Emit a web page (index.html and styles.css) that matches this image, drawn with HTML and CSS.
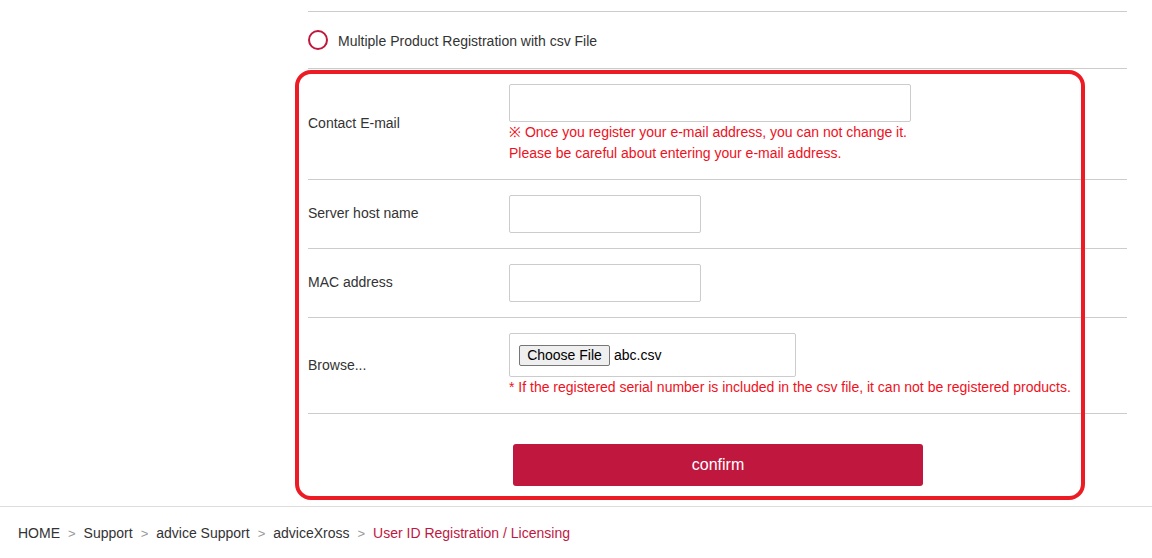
FILE: index.html
```html
<!DOCTYPE html>
<html lang="en">
<head>
<meta charset="utf-8">
<title>User ID Registration / Licensing</title>
<link rel="stylesheet" href="styles.css">
</head>
<body>
<div class="page">
  <div class="form">
    <div class="radio-row">
      <span class="radio"></span>
      <span class="radio-label">Multiple Product Registration with csv File</span>
    </div>
    <div class="row">
      <div class="label">Contact E-mail</div>
      <div class="field">
        <input class="input wide" type="text">
        <p class="note">※ Once you register your e-mail address, you can not change it.<br>Please be careful about entering your e-mail address.</p>
      </div>
    </div>
    <div class="row">
      <div class="label">Server host name</div>
      <div class="field"><input class="input narrow" type="text"></div>
    </div>
    <div class="row">
      <div class="label">MAC address</div>
      <div class="field"><input class="input narrow" type="text"></div>
    </div>
    <div class="row">
      <div class="label">Browse...</div>
      <div class="field">
        <div class="filebox"><button class="choose" type="button">Choose File</button><span class="filename">abc.csv</span></div>
        <p class="note">* If the registered serial number is included in the csv file, it can not be registered products.</p>
      </div>
    </div>
    <div class="actions">
      <button class="confirm" type="button">confirm</button>
    </div>
  </div>
  <div class="footer">
    <nav class="breadcrumb">
      <span class="crumb">HOME</span><span class="sep">&gt;</span><span class="crumb">Support</span><span class="sep">&gt;</span><span class="crumb">advice Support</span><span class="sep">&gt;</span><span class="crumb">adviceXross</span><span class="sep">&gt;</span><span class="crumb current">User ID Registration / Licensing</span>
    </nav>
  </div>
  <div class="highlight"></div>
</div>
</body>
</html>
```
FILE: styles.css
```css
html, body {
  margin: 0;
  padding: 0;
  background: #fff;
}
body {
  font-family: "Liberation Sans", Arial, sans-serif;
  font-size: 14px;
  color: #333;
}
.page {
  position: relative;
  padding-top: 11px;
  height: 547px;
}
.form {
  margin-left: 308px;
  width: 819px;
}
.radio-row {
  border-top: 1px solid #ccc;
  display: flex;
  align-items: center;
  gap: 10px;
  padding-top: 2px;
  box-sizing: border-box;
  height: 57px;
}
.radio {
  width: 20px;
  height: 20px;
  box-sizing: border-box;
  border: 2px solid #c0173f;
  border-radius: 50%;
  flex: none;
  margin-top: -2px;
}
.radio-label {
  color: #333;
}
.row {
  display: grid;
  grid-template-columns: 201px 1fr;
  align-items: center;
  border-top: 1px solid #ccc;
  padding: 15px 0;
}
.label {
  color: #333;
  margin-top: -2px;
}
.field {
  display: flex;
  flex-direction: column;
  align-items: flex-start;
}
.input {
  height: 38px;
  box-sizing: border-box;
  border: 1px solid #ccc;
  border-radius: 2px;
  margin: 0;
  padding: 0 8px;
  font: inherit;
}
.input.wide { width: 402px; }
.input.narrow { width: 192px; }
.note {
  margin: 0;
  color: #ee1122;
  line-height: 21px;
}
.filebox {
  width: 287px;
  height: 44px;
  box-sizing: border-box;
  border: 1px solid #ccc;
  border-radius: 2px;
  display: flex;
  align-items: center;
  padding-left: 9px;
}
.choose {
  font-family: "Liberation Sans", Arial, sans-serif;
  font-size: 14px;
  color: #000;
  background: #efefef;
  border: 1px solid #767676;
  border-radius: 2px;
  width: 91px;
  height: 21px;
  padding: 0;
  margin: 0 4px 0 0;
}
.filename {
  color: #000;
  font-size: 14px;
}
.actions {
  border-top: 1px solid #ccc;
  padding: 30px 0 20px;
  display: flex;
  justify-content: center;
}
.confirm {
  width: 410px;
  height: 42px;
  margin-left: 1px;
  background: #c0173f;
  color: #fff;
  border: none;
  border-radius: 3px;
  font-family: "Liberation Sans", Arial, sans-serif;
  font-size: 16px;
}
.footer {
  border-top: 1px solid #ddd;
  padding: 16px 0 0 18px;
}
.breadcrumb {
  line-height: 20px;
  color: #333;
}
.sep {
  color: #999;
  margin: 0 8px;
  font-size: 13px;
}
.current {
  color: #c0173f;
}
.highlight {
  position: absolute;
  left: 295px;
  top: 70px;
  width: 790px;
  height: 430px;
  box-sizing: border-box;
  border: 4px solid #ed1c24;
  border-radius: 16px;
  pointer-events: none;
}
```
